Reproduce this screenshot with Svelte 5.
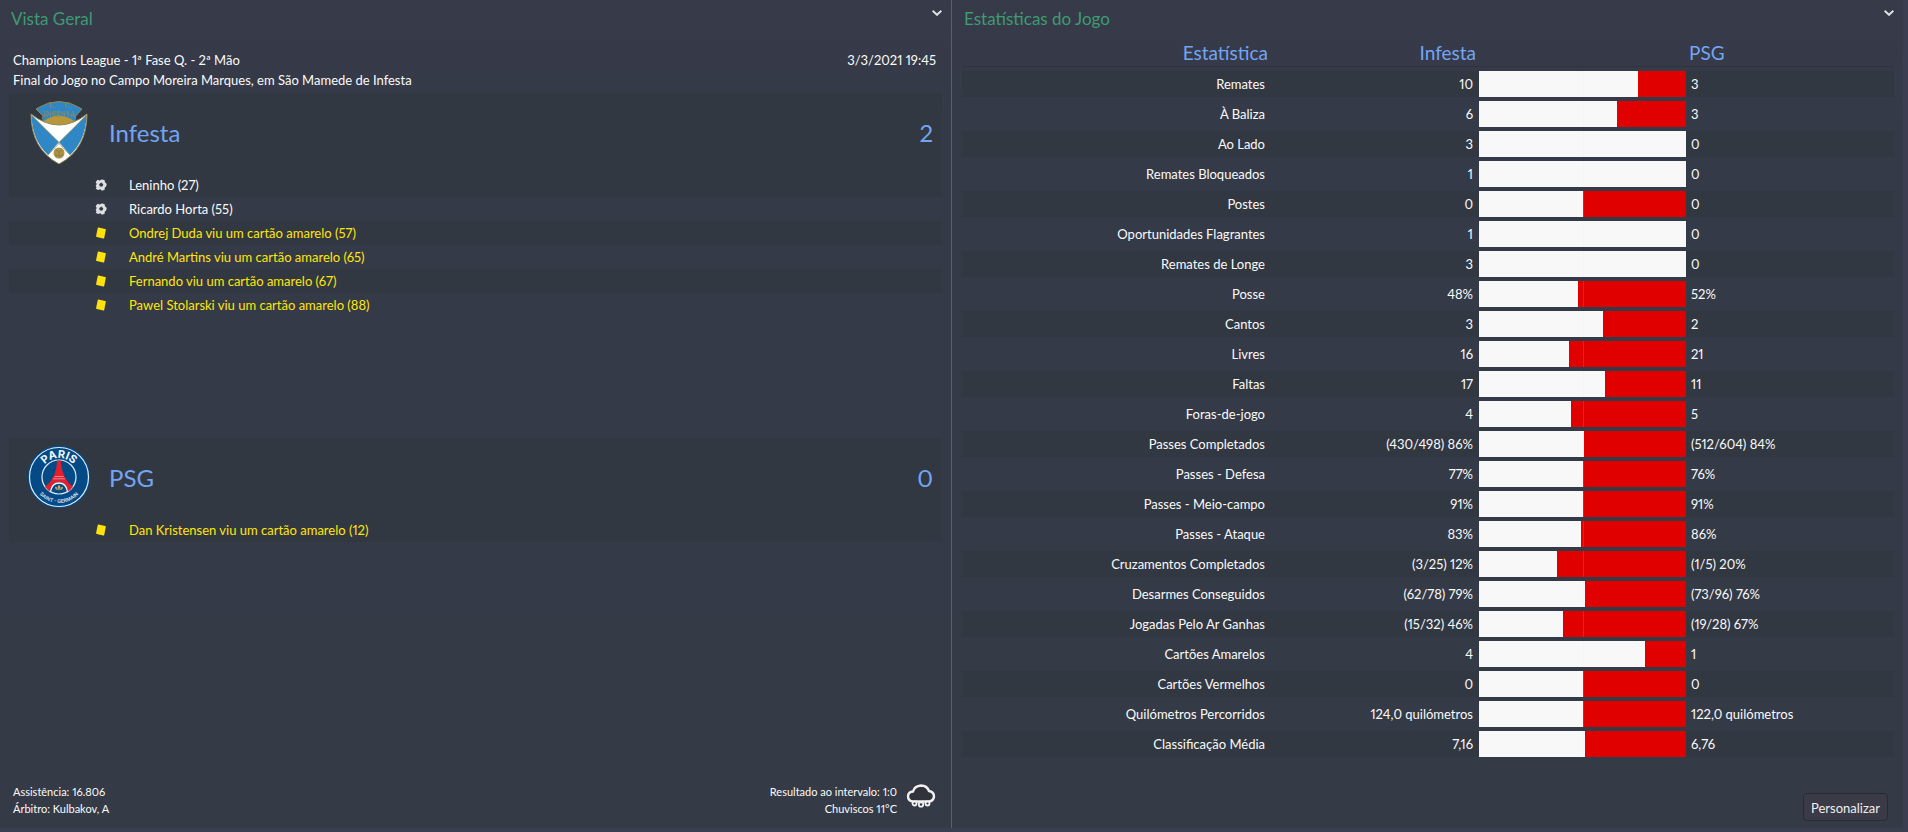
<script>
  const competition = "Champions League - 1ª Fase Q. - 2ª Mão";
  const venue =
    "Final do Jogo no Campo Moreira Marques, em São Mamede de Infesta";

  const teams = [
    {
      name: "Infesta",
      score: 2,
      events: [
        { type: "goal", text: "Leninho (27)" },
        { type: "goal", text: "Ricardo Horta (55)" },
        { type: "yellow", text: "Ondrej Duda viu um cartão amarelo (57)" },
        { type: "yellow", text: "André Martins viu um cartão amarelo (65)" },
        { type: "yellow", text: "Fernando viu um cartão amarelo (67)" },
        { type: "yellow", text: "Pawel Stolarski viu um cartão amarelo (88)" },
      ],
    },
    {
      name: "PSG",
      score: 0,
      events: [
        { type: "yellow", text: "Dan Kristensen viu um cartão amarelo (12)" },
      ],
    },
  ];

  // home / away are the values used for the bar, the labels are what is shown
  const stats = [
    { name: "Remates", home: 10, away: 3 },
    { name: "À Baliza", home: 6, away: 3 },
    { name: "Ao Lado", home: 3, away: 0 },
    { name: "Remates Bloqueados", home: 1, away: 0 },
    { name: "Postes", home: 0, away: 0 },
    { name: "Oportunidades Flagrantes", home: 1, away: 0 },
    { name: "Remates de Longe", home: 3, away: 0 },
    { name: "Posse", home: 48, away: 52, homeLabel: "48%", awayLabel: "52%" },
    { name: "Cantos", home: 3, away: 2 },
    { name: "Livres", home: 16, away: 21 },
    { name: "Faltas", home: 17, away: 11 },
    { name: "Foras-de-jogo", home: 4, away: 5 },
    { name: "Passes Completados", home: 86, away: 84, homeLabel: "(430/498) 86%", awayLabel: "(512/604) 84%" },
    { name: "Passes - Defesa", home: 77, away: 76, homeLabel: "77%", awayLabel: "76%" },
    { name: "Passes - Meio-campo", home: 91, away: 91, homeLabel: "91%", awayLabel: "91%" },
    { name: "Passes - Ataque", home: 83, away: 86, homeLabel: "83%", awayLabel: "86%" },
    { name: "Cruzamentos Completados", home: 12, away: 20, homeLabel: "(3/25) 12%", awayLabel: "(1/5) 20%" },
    { name: "Desarmes Conseguidos", home: 79, away: 76, homeLabel: "(62/78) 79%", awayLabel: "(73/96) 76%" },
    { name: "Jogadas Pelo Ar Ganhas", home: 46, away: 67, homeLabel: "(15/32) 46%", awayLabel: "(19/28) 67%" },
    { name: "Cartões Amarelos", home: 4, away: 1 },
    { name: "Cartões Vermelhos", home: 0, away: 0 },
    { name: "Quilómetros Percorridos", home: 124, away: 122, homeLabel: "124,0 quilómetros", awayLabel: "122,0 quilómetros" },
    { name: "Classificação Média", home: 7.16, away: 6.76, homeLabel: "7,16", awayLabel: "6,76" },
  ];

  function homeShare(stat) {
    const total = stat.home + stat.away;
    if (total === 0) return 50;
    return (stat.home / total) * 100;
  }
</script>

{#snippet chevron(label)}
  <button class="chevron" type="button" aria-label={label}>
    <svg viewBox="0 0 10 6" width="10" height="6">
      <path d="M0.600 0.800 L5 4.800 L9.400 0.800" fill="none" stroke="#dfe0e4" stroke-width="2" />
    </svg>
  </button>
{/snippet}

<main class="screen">
  <section class="panel overview">
    <header class="panel-header">
      <h2>Vista Geral</h2>
      {@render chevron("Opções da vista geral")}
    </header>

    <div class="match-info">
      <div>
        <p>{competition}</p>
        <p>{venue}</p>
      </div>
      <time datetime="2021-03-03T19:45">3/3/2021 19:45</time>
    </div>

    <div class="teams">
      {#each teams as team}
        <article class="team">
          <div class="team-header">
            {#if team.name === "Infesta"}
              <svg class="crest" viewBox="0 0 64 64" aria-hidden="true">
                <path d="M9 9 Q32 -6 55 9 L47 18 L47 22 L17 22 L17 17 Z" fill="#2f87c6" stroke="#94884f" stroke-width="1" />
                <path d="M15 17 Q32 8 49 17 L47 24 L17 24 Z" fill="#2f87c6" stroke="#94884f" stroke-width="0.7" />
                <path d="M17 21 Q32 10 47 21 L43 27 L21 27 Z" fill="#b8963c" />
                <path d="M4 14 Q32 36 60 14 Q60 49 32 64 Q4 49 4 14 Z" fill="#fdfefd" />
                <path d="M4.500 15 L32 42 L21 55 Q5 40 4.500 15 Z" fill="#2f87c6" />
                <path d="M59.500 15 L32 42 L43 55 Q59 40 59.500 15 Z" fill="#2f87c6" />
                <path d="M4 14 Q32 36 60 14 Q60 49 32 64 Q4 49 4 14 Z" fill="none" stroke="#94884f" stroke-width="1" />
                <path d="M4.500 15 L43 55 M59.500 15 L21 55" stroke="#94884f" stroke-width="0.7" />
                <circle cx="32" cy="53" r="5.500" fill="#ad9040" />
                <path d="M29 50 L32 52 L35 50 M32 52 L32 56 M28 55 L32 56 L36 55" fill="none" stroke="#7c7a4e" stroke-width="0.7" />
                <text x="25" y="8" class="crest-text">E.</text>
                <text x="41" y="8" class="crest-text">C.</text>
                <text x="32" y="17" class="crest-text">INFESTA</text>
              </svg>
            {:else}
              <svg class="crest" viewBox="0 0 64 64" aria-hidden="true">
                <defs>
                  <path id="psg-top" d="M13 32 A19 19 0 0 1 51 32" />
                  <path id="psg-bottom" d="M6 32 A26 26 0 0 0 58 32" />
                </defs>
                <circle cx="32" cy="32" r="31.500" fill="#034a86" />
                <circle cx="32" cy="32" r="29.500" fill="none" stroke="#e4edf4" stroke-width="1.200" />
                <circle cx="32" cy="32" r="17" fill="#034a86" stroke="#e4edf4" stroke-width="1.200" />
                <path d="M30.200 15.500 H33.800 Q34.500 33 46 42 L41.500 46.500 Q39 37 32 37 Q25 37 22.500 46.500 L18 42 Q29.500 33 30.200 15.500 Z" fill="#e0202f" />
                <path d="M27.500 31.500 H36.500 M26 33.800 H38" stroke="#f1a2a8" stroke-width="0.8" />
                <path d="M23.500 46.500 Q25 38 32 38 Q39 38 40.500 46.500" fill="none" stroke="#f3f6f9" stroke-width="1.300" />
                <path d="M32 39.500 L33.500 42 L32 46 L30.500 42 Z M28 42 Q30 41 31 45 Q28 45 28 42 Z M36 42 Q34 41 33 45 Q36 45 36 42 Z" fill="#c4a660" />
                <text class="psg-name">
                  <textPath href="#psg-top" startOffset="50%">PARIS</textPath>
                </text>
                <text class="psg-sub">
                  <textPath href="#psg-bottom" startOffset="50%">SAINT - GERMAIN</textPath>
                </text>
              </svg>
            {/if}
            <h3>{team.name}</h3>
            <span class="score">{team.score}</span>
          </div>
          <ul class="events">
            {#each team.events as event}
              <li class={event.type}>
                {#if event.type === "goal"}
                  <svg viewBox="0 0 12 12" width="12" height="12" aria-hidden="true">
                    <path d="M2.500 0.800 L4.800 1.600 L6.500 0.400 L9.500 1 L10 3.200 L11.800 5 L11 7.800 L9.800 8.500 L9.600 10.800 L7 11.700 L5.500 10.200 L3 11 L0.800 9.800 L1.500 8 L0.600 6.800 L1.800 5 L0.600 3.200 Z" fill="#dedfe2" />
                    <path d="M6.200 3.600 L8.300 5.200 L7.500 7.600 L4.900 7.600 L4.100 5.200 Z" fill="#343944" />
                  </svg>
                {:else}
                  <svg viewBox="0 0 12 12" width="12" height="12" aria-hidden="true">
                    <path d="M3.600 0.600 L10.200 2 Q11 2.200 10.800 3 L9.200 10.900 Q9 11.600 8.300 11.500 L1.700 10 Q1 9.800 1.100 9.100 L2.700 1.200 Q2.900 0.500 3.600 0.600 Z" fill="#ffe20a" />
                  </svg>
                {/if}
                <span>{event.text}</span>
              </li>
            {/each}
          </ul>
        </article>
      {/each}
    </div>

    <footer class="match-footer">
      <div>
        <p>Assistência: 16.806</p>
        <p>Árbitro: Kulbakov, A</p>
      </div>
      <div class="conditions">
        <div>
          <p>Resultado ao intervalo: 1:0</p>
          <p>Chuviscos 11°C</p>
        </div>
        <svg viewBox="0 0 30 26" width="30" height="26" aria-hidden="true">
          <path d="M7 18.500 Q2 18 2 13 Q2.300 9 7 8.500 Q8.500 3 15 2.500 Q21 2.500 23 8 Q28 9 28 13.500 Q27.500 18 23 18.500 Z" fill="#30343a" stroke="#f1f1f1" stroke-width="2.400" />
          <g fill="#30343a" stroke="#f1f1f1" stroke-width="1.800">
            <circle cx="8.500" cy="20.500" r="2" />
            <circle cx="15" cy="21.500" r="2.200" />
            <circle cx="21.500" cy="20.500" r="2" />
          </g>
        </svg>
      </div>
    </footer>
  </section>

  <section class="panel statistics">
    <header class="panel-header">
      <h2>Estatísticas do Jogo</h2>
      {@render chevron("Opções das estatísticas")}
    </header>

    <table>
      <colgroup>
        <col />
        <col class="col-value" />
        <col class="col-bar" />
        <col class="col-value" />
      </colgroup>
      <thead>
        <tr>
          <th scope="col">Estatística</th>
          <th scope="col">Infesta</th>
          <td></td>
          <th scope="col" class="away-head">PSG</th>
        </tr>
      </thead>
      <tbody>
        {#each stats as stat}
          <tr>
            <th scope="row">{stat.name}</th>
            <td class="home">{stat.homeLabel ?? stat.home}</td>
            <td class="bar-cell">
              <div class="bar">
                <div class="bar-home" style="width: {homeShare(stat)}%"></div>
              </div>
            </td>
            <td class="away">{stat.awayLabel ?? stat.away}</td>
          </tr>
        {/each}
      </tbody>
    </table>

    <button class="customize" type="button">Personalizar</button>
  </section>
</main>

<style>
  :global(body) {
    background-color: #3a3e50;
  }

  .screen {
    display: grid;
    grid-template-columns: 952fr 951fr;
    box-sizing: border-box;
    min-height: 100vh;
    padding: 0 5px 4px 0;
    font-family: Lato, "Open Sans", sans-serif;
    font-size: 13px;
    font-variant-numeric: proportional-nums;
    color: #fafafa;
  }

  h2,
  h3,
  p,
  ul {
    margin: 0;
    padding: 0;
  }

  .panel {
    display: flex;
    flex-direction: column;
    background: linear-gradient(#373a49, #353a48 15%, #353a47);
  }

  .overview {
    padding: 0 9px;
    border-right: 1px solid #5b5f6c;
  }

  .statistics {
    padding: 0 9px 0 10px;
    border-radius: 0 0 4px 0;
  }

  .panel-header {
    display: flex;
    justify-content: space-between;
    align-items: flex-start;
    height: 35px;
  }

  h2 {
    padding: 9px 2px 0;
    font-size: 17px;
    line-height: 20px;
    font-weight: 400;
    color: #3e9b73;
  }

  .chevron {
    display: flex;
    padding: 10px 0;
    border: none;
    background: none;
    cursor: pointer;
  }

  .match-info {
    display: flex;
    justify-content: space-between;
    padding: 15px 6px 3px 4px;
    line-height: 20px;
  }

  .teams {
    display: flex;
    flex: 1;
    flex-direction: column;
  }

  .team {
    flex: 1;
  }

  .team-header {
    display: flex;
    align-items: center;
    gap: 18px;
    box-sizing: border-box;
    height: 80px;
    padding: 0 9px 2px 18px;
    background-color: #323842;
    font-size: 24px;
    color: #72a5f4;
  }

  .crest {
    width: 64px;
    height: 64px;
  }

  .crest-text {
    font-family: "Liberation Serif", serif;
    font-size: 8px;
    text-anchor: middle;
    fill: #8b8a5c;
  }

  .psg-name {
    font-family: Inter, sans-serif;
    font-size: 11px;
    font-weight: 700;
    text-anchor: middle;
    fill: #f3f6f9;
  }

  .psg-sub {
    font-family: Inter, sans-serif;
    font-size: 5px;
    font-weight: 700;
    text-anchor: middle;
    fill: #c9dae8;
  }

  h3 {
    flex: 1;
    font-size: 24px;
    font-weight: 400;
  }

  .events {
    list-style: none;
  }

  .events li {
    display: flex;
    align-items: center;
    gap: 22px;
    height: 24px;
    padding-left: 86px;
  }

  .events li:nth-child(odd) {
    background-color: #323842;
  }

  .yellow {
    color: #ffe60a;
  }

  .match-footer {
    display: flex;
    justify-content: space-between;
    padding: 0 6px 11px 4px;
    font-size: 11px;
    line-height: 17px;
  }

  .conditions {
    display: flex;
    gap: 9px;
    text-align: right;
  }

  table {
    width: 100%;
    table-layout: fixed;
    border-spacing: 0 4px;
  }

  .col-value {
    width: 208px;
  }

  .col-bar {
    width: 210px;
  }

  th,
  td {
    padding: 0;
    font-weight: 400;
    text-align: right;
  }

  thead th,
  thead td {
    height: 27px;
    padding-top: 1px;
    box-sizing: border-box;
    border-bottom: 1px solid #2f333e;
    font-size: 19px;
    line-height: 26px;
    color: #72a5f4;
  }

  tbody th,
  .home {
    padding-right: 3px;
  }

  tbody th,
  tbody td {
    height: 26px;
    line-height: 26px;
  }

  tbody tr:nth-child(odd) {
    background-color: #323842;
  }

  .away,
  .away-head {
    padding-left: 3px;
    text-align: left;
  }

  .away {
    padding-left: 5px;
  }

  .bar-cell {
    padding-left: 3px;
  }

  .bar {
    position: relative;
    height: 26px;
    background-color: #e10000;
  }

  .bar-home {
    height: 100%;
    background-color: #f8f8f8;
  }

  /* half-way mark */
  .bar::after {
    content: "";
    position: absolute;
    top: 0;
    bottom: 0;
    left: 50%;
    width: 1px;
    background-color: rgba(220, 220, 220, 0.15);
  }

  .customize {
    align-self: flex-end;
    height: 28px;
    margin: auto 6px 7px 0;
    padding: 2px 7px 0;
    border: 1px solid #282b33;
    border-radius: 4px;
    background-color: #3a3b47;
    font-family: inherit;
    font-size: 13px;
    color: #eeeeee;
    cursor: pointer;
  }
</style>
